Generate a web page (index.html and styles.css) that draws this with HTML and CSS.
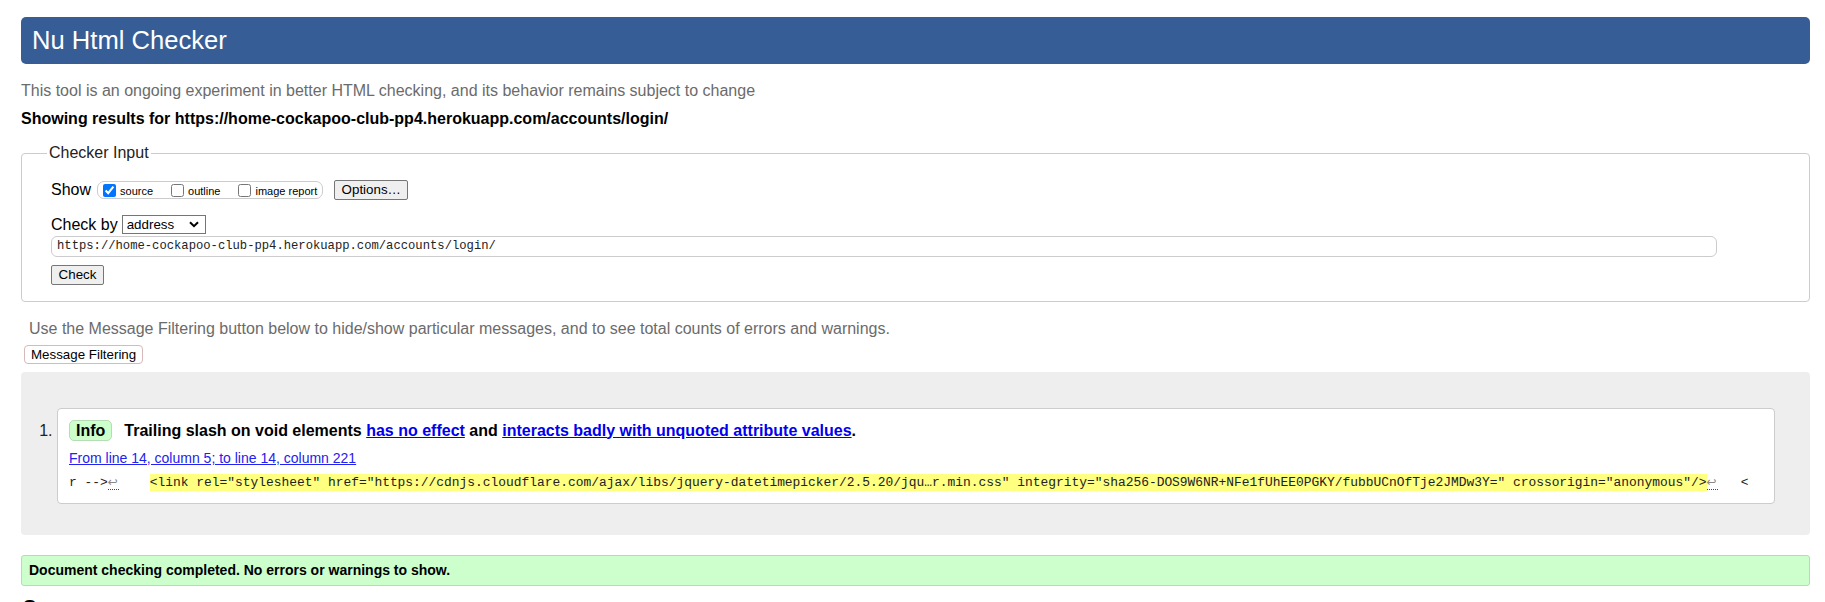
FILE: index.html
```
<!DOCTYPE html>
<html lang="en">
<head>
<meta charset="utf-8">
<title>Showing results for https://home-cockapoo-club-pp4.herokuapp.com/accounts/login/ - Nu Html Checker</title>
<link rel="stylesheet" href="styles.css">
</head>
<body>
<h1 class="title">Nu Html Checker</h1>
<p class="lead">This tool is an ongoing experiment in better HTML checking, and its behavior remains subject to change</p>
<p class="showing">Showing results for https://home-cockapoo-club-pp4.herokuapp.com/accounts/login/</p>
<form class="checker">
  <fieldset class="checker-fs">
    <legend class="checker-legend">Checker Input</legend>
    <div class="row show-row">
      <span class="row-label">Show</span>
      <span class="opts">
        <label class="opt"><input type="checkbox" class="cb" checked><span>source</span></label>
        <label class="opt"><input type="checkbox" class="cb"><span>outline</span></label>
        <label class="opt"><input type="checkbox" class="cb"><span>image report</span></label>
      </span>
      <button type="button" class="btn options-btn">Options…</button>
    </div>
    <div class="row by-row">
      <span class="row-label">Check by</span>
      <span class="select"><span>address</span><svg class="chev" width="10" height="7" viewBox="0 0 10 7"><path d="M1 1.2 L5 5.2 L9 1.2" fill="none" stroke="#000" stroke-width="2"/></svg></span>
    </div>
    <div class="url">https://home-cockapoo-club-pp4.herokuapp.com/accounts/login/</div>
    <button type="button" class="btn check-btn">Check</button>
  </fieldset>
</form>
<p class="filter-note">Use the Message Filtering button below to hide/show particular messages, and to see total counts of errors and warnings.</p>
<button type="button" class="filter-btn">Message Filtering</button>
<div class="results">
  <ol class="msgs">
    <li class="msg">
      <p class="msg-line"><span class="badge">Info</span><span class="msg-text">Trailing slash on void elements <a href="#" class="lnk">has no effect</a> and <a href="#" class="lnk">interacts badly with unquoted attribute values</a>.</span></p>
      <p class="loc"><a href="#" class="loc-link">From line 14, column 5; to line 14, column 221</a></p>
      <p class="extract">r --&gt;<b class="lf">↩</b>    <mark class="hl">&lt;link rel="stylesheet" href="https://cdnjs.cloudflare.com/ajax/libs/jquery-datetimepicker/2.5.20/jqu…r.min.css" integrity="sha256-DOS9W6NR+NFe1fUhEE0PGKY/fubbUCnOfTje2JMDw3Y=" crossorigin="anonymous"/&gt;</mark><b class="lf">↩</b>   &lt;</p>
    </li>
  </ol>
</div>
<p class="success">Document checking completed. No errors or warnings to show.</p>
<h2 class="source-h">Source</h2>
</body>
</html>
```
FILE: styles.css
```
html { background: #fff; }
body {
  margin: 0;
  padding: 17px 15px 0 21px;
  font-family: "Liberation Sans", Arial, sans-serif;
  font-size: 16px;
  color: #000;
  overflow: hidden;
}
p { margin: 0; }
.title {
  margin: 0;
  height: 47px;
  line-height: 47px;
  padding: 0 11px;
  background: #365d95;
  color: #fff;
  border-radius: 5px;
  font-size: 25.6px;
  font-weight: normal;
}
.lead {
  margin-top: 18px;
  line-height: 18px;
  color: #6b6b6b;
}
.showing {
  margin-top: 10px;
  line-height: 18px;
  font-weight: bold;
}
.checker { margin: 16px 0 0 0; }
.checker-fs {
  margin: 0;
  padding: 18px 29px 16px 29px;
  border: 1px solid #ccc;
  border-radius: 4px;
}
.checker-legend {
  padding: 0 2px;
  margin-left: -4px;
  line-height: 18px;
  color: #222;
}
.row {
  display: flex;
  align-items: center;
}
.show-row { height: 20px; }
.row-label { line-height: 18px; }
.opts {
  display: inline-flex;
  align-items: center;
  height: 16px;
  margin-left: 6px;
  padding: 0 5px 0 5px;
  border: 1px solid #ccc;
  border-radius: 7px;
  gap: 18px;
}
.opt {
  display: inline-flex;
  align-items: center;
  font-size: 11px;
  gap: 4px;
}
.opt span { padding-top: 2px; }
.cb {
  margin: 0;
  width: 13px;
  height: 13px;
}
.btn {
  font-family: "Liberation Sans", Arial, sans-serif;
  font-size: 13.33px;
  height: 20px;
  padding: 0 6px;
  border: 1px solid #767676;
  border-radius: 2px;
  background: #efefef;
  color: #000;
  line-height: 18px;
}
.options-btn { margin-left: 11px; width: 74px; }
.by-row { margin-top: 15px; height: 19px; }
.select {
  display: inline-flex;
  align-items: center;
  justify-content: space-between;
  box-sizing: border-box;
  width: 84px;
  height: 19px;
  margin-left: 4px;
  padding: 0 6px 0 4px;
  border: 1px solid #767676;
  border-radius: 0;
  font-size: 13.33px;
}
.chev { display: block; }
.url {
  box-sizing: border-box;
  margin-top: 2px;
  width: 1666px;
  height: 21px;
  line-height: 19px;
  padding: 0 5px;
  border: 1px solid #ccc;
  border-radius: 6px;
  font-family: "Liberation Mono", "DejaVu Sans Mono", monospace;
  font-size: 12.2px;
  color: #222;
  white-space: pre;
}
.check-btn { display: block; margin-top: 8px; width: 53px; }
.filter-note {
  margin-top: 17.5px;
  padding-left: 8px;
  line-height: 18px;
  color: #6b6b6b;
}
.filter-btn {
  display: block;
  margin: 7.5px 0 0 3px;
  height: 19px;
  padding: 0 6px;
  font-family: "Liberation Sans", Arial, sans-serif;
  font-size: 13.33px;
  line-height: 17px;
  background: #fff;
  color: #000;
  border: 1px solid #d6b9b9;
  border-radius: 4px;
}
.results {
  margin-top: 8px;
  padding: 36px 35px 31px 36px;
  background: #eee;
  border-radius: 4px;
}
.msgs {
  margin: 0;
  padding: 0;
  list-style: decimal outside;
}
.msg {
  padding: 10.5px 11px 10px 11px;
  background: #fff;
  border: 1px solid #ccc;
  border-radius: 4px;
}
.msg::marker { color: #222; }
.msg-line {
  line-height: 21px;
  font-weight: bold;
}
.badge {
  display: inline-block;
  line-height: 19px;
  padding: 0 6px;
  margin-right: 12px;
  background: #ccffcc;
  border: 1px solid #b5dcb5;
  border-radius: 5px;
}
.lnk { color: #0000ee; text-decoration: underline; }
.loc {
  margin-top: 8px;
  line-height: 18px;
  font-size: 14px;
}
.loc-link { color: #2222ee; }
.extract {
  margin-top: 6px;
  height: 20px;
  line-height: 20px;
  font-family: "Liberation Mono", "DejaVu Sans Mono", monospace;
  font-size: 12.92px;
  white-space: pre;
  color: #222;
}
.hl {
  background: #ffff80;
  color: #222;
  padding: 1px 0;
}
.lf {
  display: inline;
  padding-right: 1px;
  line-height: 0;
  font-family: "DejaVu Sans", sans-serif;
  font-size: 12px;
  font-weight: normal;
  color: #888;
  border-bottom: 1px dotted #444;
}
.success {
  margin-top: 20px;
  height: 29px;
  line-height: 29px;
  padding: 0 7px;
  background: #ccffcc;
  border: 1px solid #b5dcb5;
  border-radius: 3px;
  font-size: 14px;
  font-weight: bold;
}
.source-h {
  margin: 9px 0 0 2px;
  font-size: 20px;
  line-height: 24px;
}
```
